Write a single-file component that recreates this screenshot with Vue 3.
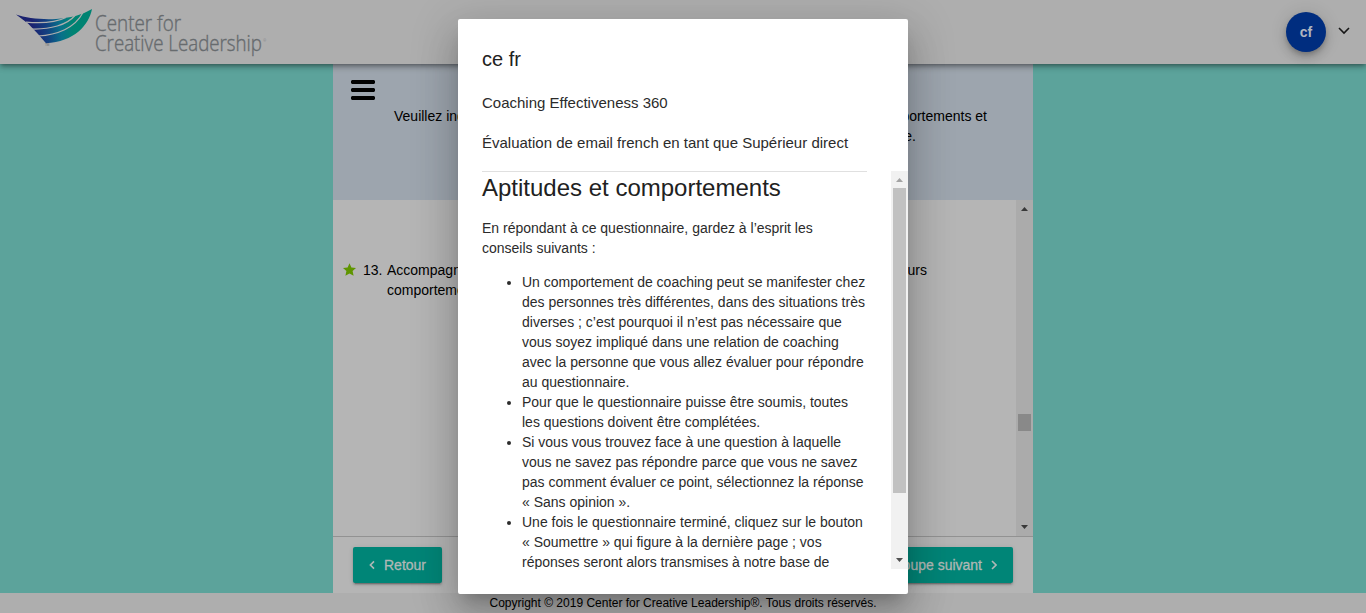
<script setup>
const tips = [
  ['Un comportement de coaching peut se manifester chez', 'des personnes très différentes, dans des situations très', 'diverses ; c’est pourquoi il n’est pas nécessaire que', 'vous soyez impliqué dans une relation de coaching', 'avec la personne que vous allez évaluer pour répondre', 'au questionnaire.'],
  ['Pour que le questionnaire puisse être soumis, toutes', 'les questions doivent être complétées.'],
  ['Si vous vous trouvez face à une question à laquelle', 'vous ne savez pas répondre parce que vous ne savez', 'pas comment évaluer ce point, sélectionnez la réponse', '« Sans opinion ».'],
  ['Une fois le questionnaire terminé, cliquez sur le bouton', '« Soumettre » qui figure à la dernière page ; vos', 'réponses seront alors transmises à notre base de'],
]
</script>

<template>
  <div class="page">
    <header class="topbar">
      <svg class="logo" width="290" height="64" viewBox="0 0 290 64">
        <defs>
          <linearGradient id="wing" gradientUnits="userSpaceOnUse" x1="32" y1="24" x2="72" y2="20">
            <stop offset="0" stop-color="#1b2270" />
            <stop offset="0.35" stop-color="#133f80" />
            <stop offset="0.7" stop-color="#08718a" />
            <stop offset="1" stop-color="#008372" />
          </linearGradient>
        </defs>
        <path fill="url(#wing)" d="M16 14.6C26 18 42 20 56 19C70 18 82 15 92 9C89 25 74 42 46 43.2L38 34L28 23.5Z" />
        <g fill="none" stroke="#aeaeae" stroke-width="1.2">
          <path d="M26 22.2C42 23.5 56 22.5 66 17.5" />
          <path d="M32 29C50 29.5 67 25 75 15.5" />
          <path d="M38 36C57 35 75 28 83 12.5" />
        </g>
        <text x="45" y="46" font-size="3" fill="#686b6d" font-family="Liberation Sans, sans-serif">TM</text>
        <g fill="#676b6e" stroke="#676b6e" stroke-width=".4" font-family="Open Sans, Noto Sans, sans-serif" font-weight="300">
          <text x="95" y="31" font-size="22" textLength="86" lengthAdjust="spacingAndGlyphs">Center for</text>
          <text x="95" y="51" font-size="22" textLength="167" lengthAdjust="spacingAndGlyphs">Creative Leadership</text>
          <text x="263" y="42" font-size="4" stroke="none">®</text>
        </g>
      </svg>
      <div class="account">
        <span class="avatar">cf</span>
        <svg width="14" height="10" viewBox="0 0 14 10"><path d="M2 2l5 5 5-5" fill="none" stroke="#171717" stroke-width="1.6" /></svg>
      </div>
    </header>

    <main class="panel">
      <section class="intro">
        <svg class="menu" width="24" height="22" viewBox="0 0 24 22"><path d="M1 1h22l1 1v2l-1 1H1L0 4V2zM1 9h22l1 1v2l-1 1H1l-1-1v-2zM1 17h22l1 1v2l-1 1H1l-1-1v-2z" /></svg>
        <div class="instructions">
          <div class="row"><span>Veuillez indiquer</span><span>comportements et</span></div>
          <div class="row short"><span></span><span>entreprise.</span></div>
        </div>
      </section>
      <section class="questions">
        <div class="question">
          <svg width="14" height="14" viewBox="0 0 14 14"><path fill="#5f9500" d="M6.5.3l1.9 4.1 4.6.5-3.4 3.2 1 4.7-4.1-2.4-4.1 2.4 1-4.7L0 4.9l4.6-.5z" /></svg>
          <span class="num">13.</span>
          <div class="qtext">
            <div class="row"><span>Accompagne</span><span>leurs</span></div>
            <div>comportements</div>
          </div>
        </div>
        <div class="bar dim">
          <i class="up"></i><b></b><i class="down"></i>
        </div>
      </section>
      <nav class="actions">
        <button><svg width="6" height="10" viewBox="0 0 6 10"><path d="M5 1.4L1.4 5 5 8.6" /></svg>Retour</button>
        <button class="next">Groupe suivant<svg width="6" height="10" viewBox="0 0 6 10"><path d="M1 1l4 4-4 4" /></svg></button>
      </nav>
    </main>

    <footer>Copyright © 2019 Center for Creative Leadership®. Tous droits réservés.</footer>

    <div class="overlay">
      <div class="dialog">
        <div class="head">
          <h2>ce fr</h2>
          <p class="name">Coaching Effectiveness 360</p>
          <p class="who">Évaluation de email french en tant que Supérieur direct</p>
        </div>
        <div class="scroll">
          <div class="body">
            <h1>Aptitudes et comportements</h1>
            <p>En répondant à ce questionnaire, gardez à l’esprit les<br />conseils suivants :</p>
            <ul>
              <li v-for="(tip, i) in tips" :key="i"><div v-for="line in tip" :key="line">{{ line }}</div></li>
            </ul>
          </div>
          <div class="bar">
            <i class="up"></i><b></b><i class="down"></i>
          </div>
        </div>
      </div>
    </div>
  </div>
</template>

<style>
body { margin: 0; overflow: hidden; }
</style>

<style scoped>
* { box-sizing: border-box; }
.page {
  position: relative;
  display: flex;
  flex-direction: column;
  width: 1366px;
  height: 613px;
  overflow: hidden;
  background: #5ca39b;
  font: 14px/20px "Liberation Sans", Arial, sans-serif;
  color: #000;
}
.topbar {
  position: relative;
  z-index: 1;
  display: flex;
  flex: none;
  justify-content: space-between;
  height: 64px;
  background: #aeaeae;
  box-shadow: 0 2px 4px -1px rgba(0,0,0,.3), 0 3px 6px rgba(0,0,0,.2), 0 1px 10px rgba(0,0,0,.1);
}
.account { display: flex; align-items: center; gap: 11px; padding-right: 15px; }
.account svg { margin-top: -2px; }
.avatar {
  width: 40px;
  height: 40px;
  border-radius: 50%;
  background: #002d7f;
  color: #b0b5bf;
  font-weight: 700;
  line-height: 41px;
  text-align: center;
  box-shadow: 0 3px 5px -1px rgba(0,0,0,.2), 0 6px 10px rgba(0,0,0,.14), 0 1px 18px rgba(0,0,0,.12);
}
.panel { display: flex; flex: none; flex-direction: column; width: 700px; height: 529px; margin: 0 auto; background: #b5b5b5; }
.intro { display: flex; height: 136px; background: #9da5ae; }
.menu { flex: none; margin: 15px 19px 0 18px; }
.instructions { width: 593px; padding-top: 42px; }
.row { display: flex; justify-content: space-between; }
.short { width: 522px; }
.questions { display: flex; justify-content: space-between; height: 336px; }
.question { display: flex; padding: 60px 0 0 10px; }
.question svg { margin-top: 3px; }
.num { width: 24px; margin-left: 6px; }
.qtext { width: 540px; }
.bar { display: flex; flex: none; flex-direction: column; align-items: center; width: 17px; background: #f1f1f1; }
.bar i { width: 7px; height: 4px; background: #505050; }
.bar .up { margin: 7px 0 6px; background: #a3a3a3; clip-path: polygon(50% 0, 100% 100%, 0 100%); }
.bar .down { margin: auto 0 7px; clip-path: polygon(0 0, 100% 0, 50% 100%); }
.bar b { width: 13px; height: 305px; background: #c1c1c1; }
.dim { background: #ababab; }
.dim .up, .dim .down { background: #393939; }
.dim b { height: 17px; margin-top: 197px; background: #898989; }
.actions { display: flex; justify-content: space-between; height: 57px; padding: 10px 20px; border-top: 1px solid #929292; }
button {
  display: flex;
  align-items: center;
  height: 36px;
  padding: 0 16px;
  border: 0;
  border-radius: 2px;
  background: #008577;
  color: #b0b8b6;
  font: 14px "Liberation Sans", Arial, sans-serif;
  -webkit-text-stroke: .3px #b0b8b6;
  gap: 9px;
  box-shadow: 0 3px 1px -2px rgba(0,0,0,.2), 0 2px 2px rgba(0,0,0,.14), 0 1px 5px rgba(0,0,0,.12);
}
button path { fill: none; stroke: #b0b8b6; stroke-width: 1.6; }
footer { flex: none; height: 20px; background: #aeaeae; font-size: 12px; text-align: center; }
.overlay { position: absolute; z-index: 2; inset: 0; display: flex; align-items: center; justify-content: center; }
.dialog {
  width: 450px;
  height: 575px;
  padding: 24px 0;
  border-radius: 2px;
  background: #fff;
  color: #2b2b2b;
  box-shadow: 0 11px 15px -7px rgba(0,0,0,.2), 0 24px 38px 3px rgba(0,0,0,.14), 0 9px 46px 8px rgba(0,0,0,.12);
}
.head { height: 129px; margin: 0 41px 0 24px; border-bottom: 1px solid #e0e0e0; }
h1, h2, p, ul { margin: 0; font-weight: 400; }
h1, h2 { color: #212121; }
h2 { height: 50px; padding-top: 0; font-size: 20px; line-height: 32px; }
.name { height: 40px; font-size: 15px; }
.who { font-size: 15px; }
.scroll { display: flex; justify-content: space-between; height: 398px; margin-top: -1px; overflow: hidden; }
.body { padding-left: 24px; }
h1 { height: 47px; padding-top: 1px; font-size: 24px; line-height: 32px; }
.body p { height: 54px; }
ul { padding-left: 40px; white-space: nowrap; }
</style>
